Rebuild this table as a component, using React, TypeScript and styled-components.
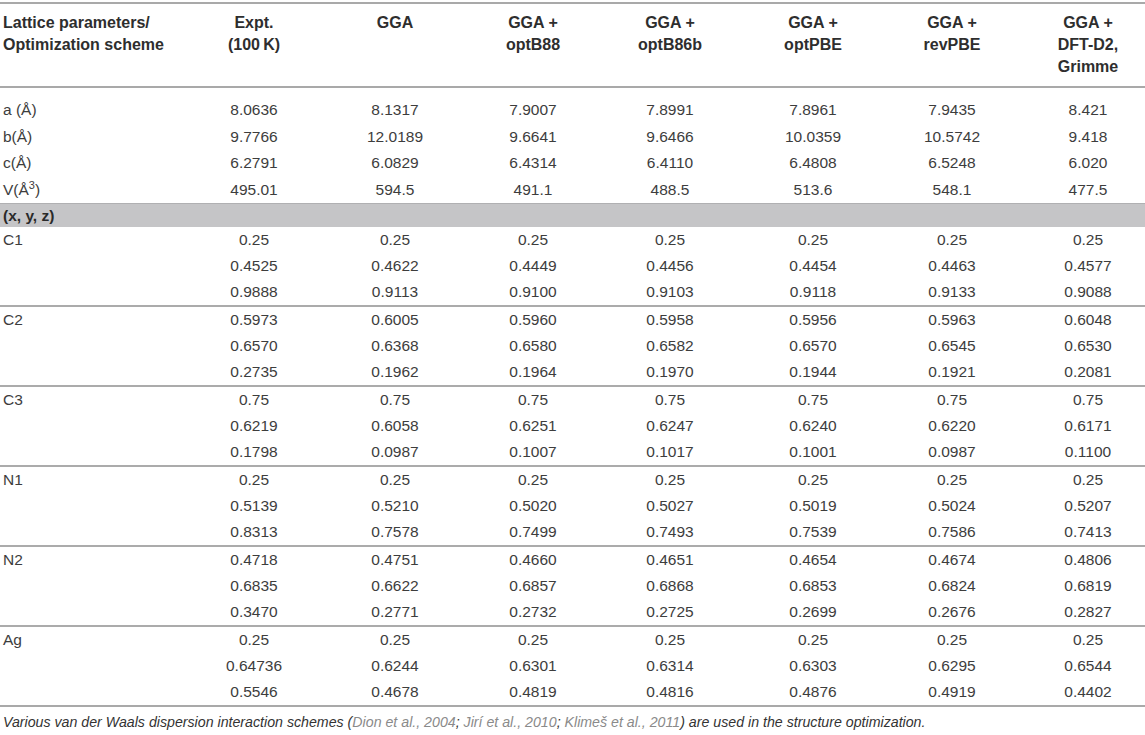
import React from "react";
import styled, { createGlobalStyle } from "styled-components";

const GlobalStyle = createGlobalStyle`
  html, body { margin: 0; padding: 0; background: #ffffff; }
  body { font-family: "Liberation Sans", Arial, Helvetica, sans-serif; color: #333; }
`;

const COLS = "184px 140px 142px 134px 140px 146px 132px 1fr";

const Page = styled.div`
  width: 1145px;
  padding-top: 2px;
  box-sizing: border-box;
`;

const Table = styled.div`
  border-top: 2px solid #a9a9a9;
  border-bottom: 2px solid #a9a9a9;
`;

const HeadRow = styled.div`
  display: grid;
  grid-template-columns: ${COLS};
  height: 84px;
  box-sizing: border-box;
  padding-top: 8px;
  border-bottom: 2px solid #a9a9a9;
`;

const HeadCell = styled.div<{ $left?: boolean }>`
  font-weight: 700;
  font-size: 16px;
  line-height: 22px;
  color: #2e2e2e;
  text-align: ${(p) => (p.$left ? "left" : "center")};
  padding-left: ${(p) => (p.$left ? "3px" : "0")};
  &:last-child { padding-left: 13px; }
`;

const Section = styled.div<{ $padTop?: number }>`
  padding-top: ${(p) => p.$padTop ?? 0}px;
`;

const Row = styled.div<{ $h: number }>`
  display: grid;
  grid-template-columns: ${COLS};
  height: ${(p) => p.$h}px;
  align-items: center;
`;

const Cell = styled.div<{ $left?: boolean }>`
  font-size: 15.5px;
  line-height: 20px;
  color: #3d3d3d;
  text-align: ${(p) => (p.$left ? "left" : "center")};
  padding-left: ${(p) => (p.$left ? "3px" : "0")};
  white-space: nowrap;
  &:last-child { padding-left: 13px; }
`;

const Band = styled.div`
  height: 24px;
  box-sizing: border-box;
  background: #c5c5c7;
  border-top: 1px solid #b0b0b2;
  display: flex;
  align-items: center;
  padding-left: 3px;
  font-weight: 700;
  font-size: 15.5px;
  color: #2a2a2a;
`;

const Group = styled.div`
  &:not(:last-child) { border-bottom: 2px solid #ababab; }
`;

const Note = styled.p`
  margin: 7px 0 0 0;
  padding-left: 3px;
  font-style: italic;
  font-size: 14.2px;
  line-height: 17px;
  color: #333;
`;

const Cite = styled.span`
  color: #8a8a8a;
`;

const headers: string[][] = [
  ["Expt.", "(100\u2009K)"],
  ["GGA"],
  ["GGA +", "optB88"],
  ["GGA +", "optB86b"],
  ["GGA +", "optPBE"],
  ["GGA +", "revPBE"],
  ["GGA +", "DFT-D2,", "Grimme"],
];

const lattice: { label: React.ReactNode; values: string[] }[] = [
  { label: "a (Å)", values: ["8.0636", "8.1317", "7.9007", "7.8991", "7.8961", "7.9435", "8.421"] },
  { label: "b(Å)", values: ["9.7766", "12.0189", "9.6641", "9.6466", "10.0359", "10.5742", "9.418"] },
  { label: "c(Å)", values: ["6.2791", "6.0829", "6.4314", "6.4110", "6.4808", "6.5248", "6.020"] },
  {
    label: (
      <>
        V(Å<sup style={{ fontSize: "11px", lineHeight: 0 }}>3</sup>)
      </>
    ),
    values: ["495.01", "594.5", "491.1", "488.5", "513.6", "548.1", "477.5"],
  },
];

const q = (v: string) => [v, v, v, v, v, v, v];

const atoms: { label: string; rows: string[][] }[] = [
  {
    label: "C1",
    rows: [
      q("0.25"),
      ["0.4525", "0.4622", "0.4449", "0.4456", "0.4454", "0.4463", "0.4577"],
      ["0.9888", "0.9113", "0.9100", "0.9103", "0.9118", "0.9133", "0.9088"],
    ],
  },
  {
    label: "C2",
    rows: [
      ["0.5973", "0.6005", "0.5960", "0.5958", "0.5956", "0.5963", "0.6048"],
      ["0.6570", "0.6368", "0.6580", "0.6582", "0.6570", "0.6545", "0.6530"],
      ["0.2735", "0.1962", "0.1964", "0.1970", "0.1944", "0.1921", "0.2081"],
    ],
  },
  {
    label: "C3",
    rows: [
      q("0.75"),
      ["0.6219", "0.6058", "0.6251", "0.6247", "0.6240", "0.6220", "0.6171"],
      ["0.1798", "0.0987", "0.1007", "0.1017", "0.1001", "0.0987", "0.1100"],
    ],
  },
  {
    label: "N1",
    rows: [
      q("0.25"),
      ["0.5139", "0.5210", "0.5020", "0.5027", "0.5019", "0.5024", "0.5207"],
      ["0.8313", "0.7578", "0.7499", "0.7493", "0.7539", "0.7586", "0.7413"],
    ],
  },
  {
    label: "N2",
    rows: [
      ["0.4718", "0.4751", "0.4660", "0.4651", "0.4654", "0.4674", "0.4806"],
      ["0.6835", "0.6622", "0.6857", "0.6868", "0.6853", "0.6824", "0.6819"],
      ["0.3470", "0.2771", "0.2732", "0.2725", "0.2699", "0.2676", "0.2827"],
    ],
  },
  {
    label: "Ag",
    rows: [
      q("0.25"),
      ["0.64736", "0.6244", "0.6301", "0.6314", "0.6303", "0.6295", "0.6544"],
      ["0.5546", "0.4678", "0.4819", "0.4816", "0.4876", "0.4919", "0.4402"],
    ],
  },
];

export default function App() {
  return (
    <>
      <GlobalStyle />
      <Page>
        <Table>
          <HeadRow>
            <HeadCell $left>
              Lattice parameters/
              <br />
              Optimization scheme
            </HeadCell>
            {headers.map((lines, i) => (
              <HeadCell key={i}>
                {lines.map((l, j) => (
                  <div key={j}>{l}</div>
                ))}
              </HeadCell>
            ))}
          </HeadRow>
          <Section $padTop={9}>
            {lattice.map((r, i) => (
              <Row key={i} $h={26.5}>
                <Cell $left>{r.label}</Cell>
                {r.values.map((v, j) => (
                  <Cell key={j}>{v}</Cell>
                ))}
              </Row>
            ))}
          </Section>
          <Band>(x, y, z)</Band>
          <Section>
            {atoms.map((g, gi) => (
              <Group key={gi}>
                {g.rows.map((vals, ri) => (
                  <Row key={ri} $h={26}>
                    <Cell $left>{ri === 0 ? g.label : ""}</Cell>
                    {vals.map((v, j) => (
                      <Cell key={j}>{v}</Cell>
                    ))}
                  </Row>
                ))}
              </Group>
            ))}
          </Section>
        </Table>
        <Note>
          Various van der Waals dispersion interaction schemes (<Cite>Dion et al., 2004</Cite>;{" "}
          <Cite>Jirí et al., 2010</Cite>; <Cite>Klimeš et al., 2011</Cite>) are used in the structure
          optimization.
        </Note>
      </Page>
    </>
  );
}
